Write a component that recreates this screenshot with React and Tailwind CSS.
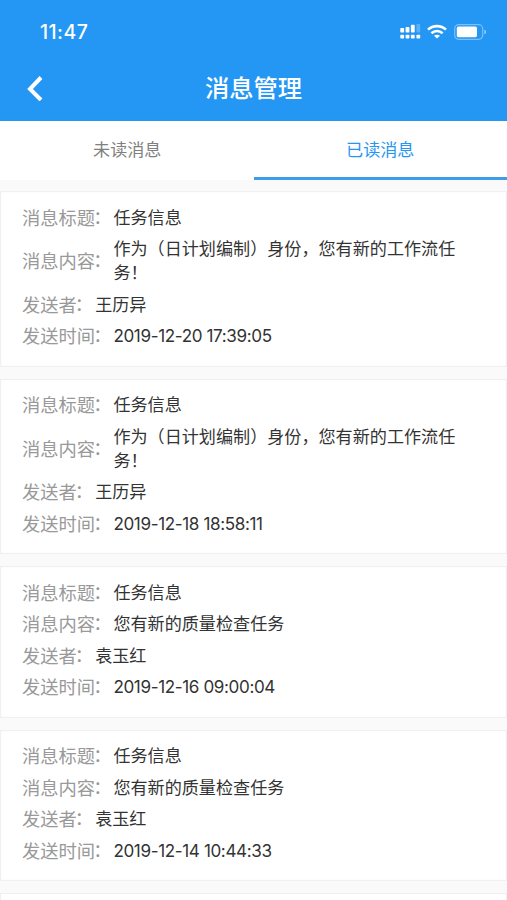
const messages = [
  { title: "任务信息", body: "作为（日计划编制）身份，您有新的工作流任务！", sender: "王历异", time: "2019-12-20 17:39:05" },
  { title: "任务信息", body: "作为（日计划编制）身份，您有新的工作流任务！", sender: "王历异", time: "2019-12-18 18:58:11" },
  { title: "任务信息", body: "您有新的质量检查任务", sender: "袁玉红", time: "2019-12-16 09:00:04" },
  { title: "任务信息", body: "您有新的质量检查任务", sender: "袁玉红", time: "2019-12-14 10:44:33" },
];

function StatusBar() {
  return (
    <div className="flex h-[62px] items-center justify-between pl-10 pr-5">
      <span className="pt-px text-[19.5px] font-medium leading-6 tracking-[0.45px]">11:47</span>
      <div className="flex items-center pt-px">
        <svg width="22" height="16" viewBox="0 0 22 16" fill="currentColor">
          <rect x="0.3" y="4" width="3.8" height="4.6" rx="0.8" />
          <rect x="5.6" y="3" width="3.8" height="5.6" rx="0.8" />
          <rect x="10.9" y="0.8" width="3.8" height="7.8" rx="0.8" />
          <rect x="16.4" y="0" width="3.8" height="8.6" rx="0.8" opacity="0.25" />
          <rect x="0.3" y="10.8" width="3.8" height="3.8" rx="0.8" />
          <rect x="5.6" y="10.8" width="3.8" height="3.8" rx="0.8" />
          <rect x="10.9" y="10.8" width="3.8" height="3.8" rx="0.8" />
          <rect x="16.4" y="10.8" width="3.8" height="3.8" rx="0.8" />
        </svg>
        <svg className="ml-[5px]" width="20" height="16" viewBox="0 0 20 16" fill="none" stroke="currentColor" strokeWidth="2.6">
          <path d="M1 5.6C6 .9 14 .9 19 5.6" />
          <path d="M4.4 9.3c3.2-3 8-3 11.2 0" />
          <path d="M10 14.6 7 11.8c1.7-1.5 4.3-1.5 6 0Z" fill="currentColor" stroke="none" />
        </svg>
        <svg className="ml-[7px]" width="33" height="16" viewBox="0 0 33 16">
          <rect x="0.7" y="0.7" width="28" height="14.6" rx="4" fill="none" stroke="currentColor" strokeWidth="1.2" opacity="0.4" />
          <rect x="2.8" y="2.6" width="20.2" height="10.6" rx="1.6" fill="currentColor" />
          <path d="M30.3 5.5v5c2.4-.8 2.4-4.2 0-5Z" fill="currentColor" opacity="0.5" />
        </svg>
      </div>
    </div>
  );
}

function Field({ label, children, numeric }) {
  return (
    <div className="flex items-center py-[3.75px]">
      <span className="flex shrink-0 text-[18.3px] leading-6 text-[#999]">
        <span>{label}</span>
        <span className="-ml-[2px] -mt-px mr-[2px]">：</span>
      </span>
      <span className={numeric ? "text-[17.1px] leading-[24px] tracking-[-0.38px]" : "w-[350px] text-[17.1px] leading-[24px]"}>
        {children}
      </span>
    </div>
  );
}

function MessageCard({ message }) {
  return (
    <article className="border border-[#f0f0f0] bg-white pb-[13.6px] pl-[21px] pr-5 pt-[9.8px] shadow-[inset_0_0_1px_#e4e4e4]">
      <Field label="消息标题">{message.title}</Field>
      <Field label="消息内容">{message.body}</Field>
      <Field label="发送者">{message.sender}</Field>
      <Field label="发送时间" numeric>{message.time}</Field>
    </article>
  );
}

export default function App() {
  return (
    <div className="flex h-[900px] w-[507px] flex-col overflow-hidden bg-[#fafafa] font-['Inter','Noto_Sans_CJK_SC',sans-serif] text-[#333]">
      <header className="h-[121px] shrink-0 bg-[#2496f3] text-white">
        <StatusBar />
        <div className="grid h-[52px] grid-cols-[60px_1fr_60px] items-center">
          <svg className="ml-[26px]" width="18" height="26" viewBox="0 0 18 26" fill="none" stroke="currentColor" strokeWidth="4">
            <path d="M15 2.5 4 14l11 11" />
          </svg>
          <h1 className="text-center text-[24.3px] font-medium leading-8">消息管理</h1>
        </div>
      </header>
      <nav className="grid h-[58.5px] shrink-0 grid-cols-2 bg-white text-[17.1px] leading-6">
        <button className="flex items-center justify-center border-b-3 border-white pl-px pt-[2px] text-[#808080]">未读消息</button>
        <button className="flex items-center justify-center border-b-3 border-[#3f9ce6] pt-[2px] text-[#2496f3]">已读消息</button>
      </nav>
      <main className="flex min-h-0 flex-1 flex-col gap-[12px] pt-[11.9px]">
        {messages.map((message) => (
          <MessageCard key={message.time} message={message} />
        ))}
        <article className="flex-1 border border-b-0 border-[#f0f0f0] bg-white" />
      </main>
    </div>
  );
}
